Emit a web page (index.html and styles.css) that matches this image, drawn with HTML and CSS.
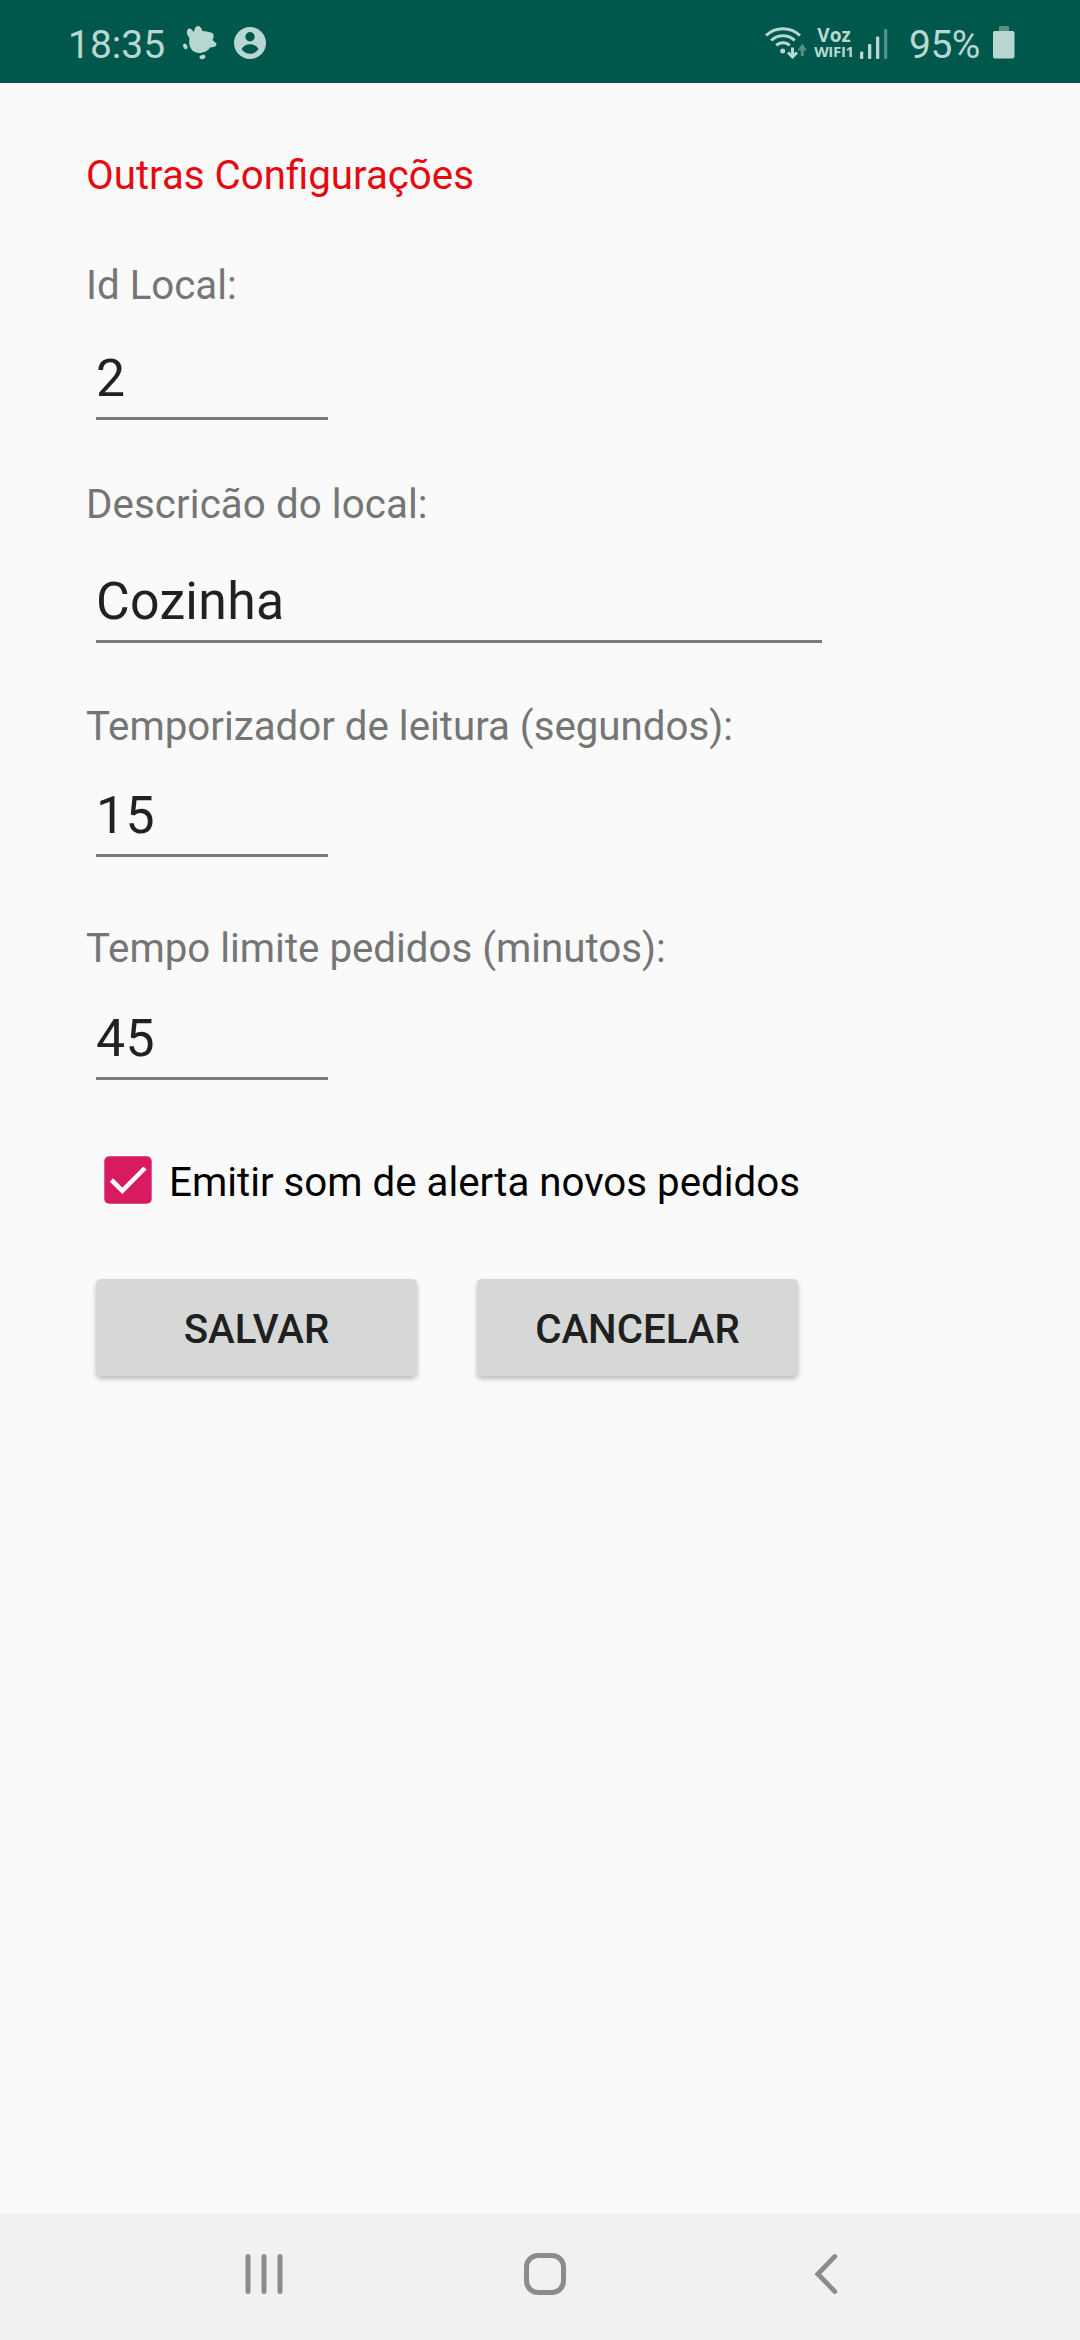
FILE: index.html
```html
<!DOCTYPE html>
<html lang="pt-BR">
<head>
<meta charset="utf-8">
<title>Outras Configurações</title>
<link rel="stylesheet" href="styles.css">
</head>
<body>
<header class="status">
  <span class="clock">18:35</span>
  <svg class="notif-leaf" width="36" height="36" viewBox="0 0 36 36" fill="currentColor"><path d="M4 7C3.500 3 6 1.500 8 3L11 6C11.500 3 12.500 0 15 0C17 0 18.500 2 19.500 5C22 5.500 25 5.500 28 6.500C31 7.500 31.500 10.500 29.500 13.500C30 15.500 33.800 16.500 33.500 18.500C33 21 30 21 27 21.500C25.500 24.500 21 27 15.500 27C8.500 26.500 5 20 6.500 12C5 10.500 4.300 9 4 7z"/><ellipse cx="2.300" cy="20.300" rx="2" ry="2.900" transform="rotate(-25 2.300 20.300)"/><ellipse cx="19.500" cy="31" rx="3" ry="2" transform="rotate(-15 19.500 31)"/></svg>
  <svg class="notif-user" width="32" height="32" viewBox="0 0 32 32"><path fill="currentColor" fill-rule="evenodd" d="M16 0a16 16 0 1 1 0 32a16 16 0 1 1 0-32zM16 5a4.700 4.700 0 1 0 0 9.400a4.700 4.700 0 1 0 0-9.400zM7.500 22c2 3 5 4.800 8.500 4.800s6.500-1.800 8.500-4.800c-1.700-3-5-4.700-8.500-4.700s-6.800 1.700-8.500 4.700z"/></svg>
  <svg class="wifi" width="42" height="34" viewBox="0 0 42 34" fill="none" stroke="currentColor" stroke-width="3"><path d="M1 9.500a24.500 24.500 0 0 1 34 0M6.200 14.500a17 17 0 0 1 23.600 0M11.300 19.400a9.500 9.500 0 0 1 13.400 0"/><circle cx="17.700" cy="25" r="2.500" fill="currentColor" stroke="none"/><path d="M27.500 21.500v9M23 26.500l4.500 4.500 4.500-4.500"/><g opacity=".45"><path d="M37.300 30v-9"/><path d="M32.500 24.500l4.800-7 4.700 7z" fill="currentColor" stroke="none"/></g></svg>
  <span class="carrier"><span class="voz">Voz</span><span class="wifi1">WIFI1</span></span>
  <svg class="signal" width="28" height="30" viewBox="0 0 28 30" fill="currentColor"><rect x="0" y="22.500" width="3.300" height="7.500" rx="1"/><rect x="8" y="15" width="3.300" height="15" rx="1"/><rect x="16" y="7.500" width="3.300" height="22.500" rx="1"/><rect x="24" y="0" width="3.300" height="30" rx="1" opacity=".45"/></svg>
  <span class="percent">95%</span>
  <svg class="battery" width="22" height="33" viewBox="0 0 22 33" fill="currentColor"><path d="M6 5V1q0-1 1-1h8q1 0 1 1v4z" opacity=".45"/><rect y="5" width="21.500" height="27.500" rx="2"/></svg>
</header>
<main class="form">
  <h1 class="title">Outras Configurações</h1>
  <div class="label label-id">Id Local:</div>
  <div class="field field-id">2</div>
  <div class="label label-desc">Descricão do local:</div>
  <div class="field field-desc">Cozinha</div>
  <div class="label label-timer">Temporizador de leitura (segundos):</div>
  <div class="field field-timer">15</div>
  <div class="label label-limit">Tempo limite pedidos (minutos):</div>
  <div class="field field-limit">45</div>
  <div class="check-row">
    <svg width="48" height="48" viewBox="0 0 48 48"><rect x=".3" y=".3" width="47.400" height="47.400" rx="5" fill="#d81b60"/><path d="M7.500 24l10.800 10.800L41 12" fill="none" stroke="#fff" stroke-width="4.600"/></svg>
    <span class="check-text">Emitir som de alerta novos pedidos</span>
  </div>
  <div class="actions">
    <button class="btn" type="button">SALVAR</button>
    <button class="btn" type="button">CANCELAR</button>
  </div>
</main>
<nav class="navbar">
  <svg class="recents" width="38" height="42" viewBox="0 0 38 42" stroke="currentColor" stroke-width="5" stroke-linecap="round"><path d="M3 3.500v35M19 3.500v35M35 3.500v35"/></svg>
  <svg class="home" width="42" height="42" viewBox="0 0 42 42" fill="none" stroke="currentColor" stroke-width="5"><rect x="2.500" y="2.500" width="37" height="37" rx="11.500"/></svg>
  <svg class="back" width="24" height="42" viewBox="0 0 24 42" fill="none" stroke="currentColor" stroke-width="4.800" stroke-linecap="round"><path d="M20.800 3.500L3.800 21l17 17.500"/></svg>
</nav>
</body>
</html>
```
FILE: styles.css
```css
* { box-sizing: border-box; }
body {
  margin: 0;
  width: 1080px;
  height: 2340px;
  display: flex;
  flex-direction: column;
  background: #fafafa;
  font-family: Roboto, "Liberation Sans", sans-serif;
  overflow: hidden;
}
svg { display: block; flex: none; }

.status {
  height: 83px;
  flex: none;
  display: flex;
  align-items: flex-start;
  padding-left: 68px;
  background: #00574b;
  color: #b9d7d2;
  white-space: nowrap;
}
.clock, .percent { font-size: 39px; line-height: 46px; margin-top: 22px; }
.clock { width: 115px; }
.notif-leaf { margin-top: 26px; }
.notif-user { margin: 27px 0 0 15px; }
.wifi { margin: 26px 0 0 499px; }
.carrier {
  width: 40px;
  margin: 27px 0 0 7px;
  display: flex;
  flex-direction: column;
  align-items: center;
  font-family: "Open Sans", "Noto Sans", sans-serif;
  font-weight: 700;
}
.voz { font-size: 19px; line-height: 17px; }
.wifi1 { font-size: 15px; line-height: 15px; letter-spacing: -.3px; }
.signal { margin: 29px 0 0 6px; }
.percent { width: 84px; margin-left: 21px; letter-spacing: -.5px; }
.battery { margin: 26px 0 0 0; }

.form { flex: 1; padding: 69px 86px 0; }
.title, .label {
  margin: 0;
  font-size: 40.25px;
  font-weight: 400;
  line-height: 48px;
  white-space: nowrap;
}
.title { color: #e60a0e; }
.label { color: #757575; }
.label-id { margin-top: 62px; }
.label-desc { margin-top: 61px; letter-spacing: .1px; }
.label-timer { margin-top: 60px; }
.label-limit { margin-top: 68px; }

.field {
  width: 232px;
  height: 71px;
  margin-left: 10px;
  border-bottom: 3px solid #7b7b7b;
  font-size: 51.75px;
  line-height: 60px;
  letter-spacing: .3px;
  color: #212121;
}
.field-id { margin-top: 39px; }
.field-desc { width: 726px; margin-top: 43px; }
.field-timer { margin-top: 35px; }
.field-limit { margin-top: 36px; }

.check-row {
  display: flex;
  margin: 76px 0 0 18px;
  height: 48px;
}
.check-text {
  margin: 3px 0 0 17px;
  font-size: 40.25px;
  line-height: 48px;
  color: #000;
  white-space: nowrap;
}
.actions {
  display: flex;
  gap: 60px;
  margin: 75px 0 0 10px;
}
.btn {
  width: 321px;
  height: 97px;
  border: 0;
  border-radius: 5px;
  padding: 4px 0 0;
  background: #d6d7d7;
  box-shadow: 0 3px 5px rgba(0, 0, 0, .25);
  font: 500 40.25px/46px Roboto, "Liberation Sans", sans-serif;
  color: #1f1f1f;
}

.navbar {
  height: 126px;
  flex: none;
  display: flex;
  align-items: flex-start;
  padding: 39px 0 0 245px;
  background: #f1f1f1;
  color: #8c8c8c;
}
.home { margin-left: 241px; }
.back { margin-left: 248px; }
```
